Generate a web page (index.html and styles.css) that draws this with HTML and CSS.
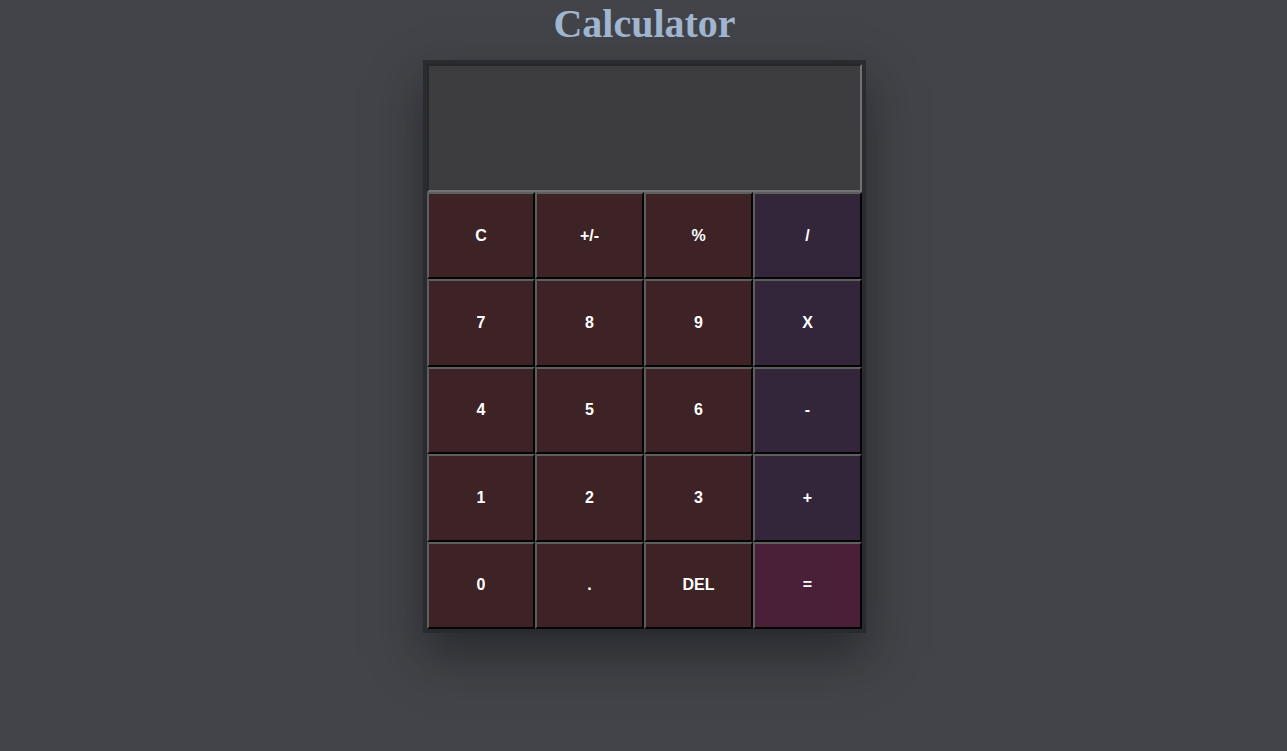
FILE: index.html
```html
<!DOCTYPE html>
<html>
<head>
<meta charset="utf-8">
<title>Calculator</title>
<link rel="stylesheet" href="styles.css">
</head>
<body>
<h1 class="title">Calculator</h1>
<div class="calc">
  <div class="display"></div>
  <div class="keys">
    <button class="key">C</button>
    <button class="key">+/-</button>
    <button class="key">%</button>
    <button class="key op">/</button>
    <button class="key">7</button>
    <button class="key">8</button>
    <button class="key">9</button>
    <button class="key op">X</button>
    <button class="key">4</button>
    <button class="key">5</button>
    <button class="key">6</button>
    <button class="key op">-</button>
    <button class="key">1</button>
    <button class="key">2</button>
    <button class="key">3</button>
    <button class="key op">+</button>
    <button class="key">0</button>
    <button class="key">.</button>
    <button class="key">DEL</button>
    <button class="key eq">=</button>
  </div>
</div>
</body>
</html>
```
FILE: styles.css
```css
html, body {
  margin: 0;
  padding: 0;
}
body {
  background: #434449;
  min-height: 751px;
  display: flex;
  flex-direction: column;
  align-items: center;
}
.title {
  margin: 1px 0 13px 2px;
  font-family: "Liberation Serif", "Times New Roman", serif;
  font-weight: bold;
  font-size: 40px;
  line-height: 46px;
  color: #a1b7d1;
}
.calc {
  width: 435px;
  margin-left: 2px;
  border: 4px solid #2a2b30;
  background: #2a2b30;
  box-shadow: 0 22px 45px rgba(20, 20, 25, 0.55);
  display: flex;
  flex-direction: column;
}
.display {
  height: 124px;
  background: #3d3d3f;
  border: 2px solid;
  border-color: #27272b #727272 #727272 #27272b;
}
.keys {
  display: grid;
  grid-template-columns: 108px 109px 109px 109px;
  grid-auto-rows: 87.4px;
}
.key {
  margin: 0;
  padding: 0;
  background: #3e2326;
  border: 2px solid;
  border-color: #5e5e5e #050505 #050505 #5e5e5e;
  color: #ffffff;
  font-family: "Liberation Sans", Arial, sans-serif;
  font-weight: bold;
  font-size: 16px;
}
.key.op {
  background: #33263b;
}
.key.eq {
  background: #4a2039;
}
```
